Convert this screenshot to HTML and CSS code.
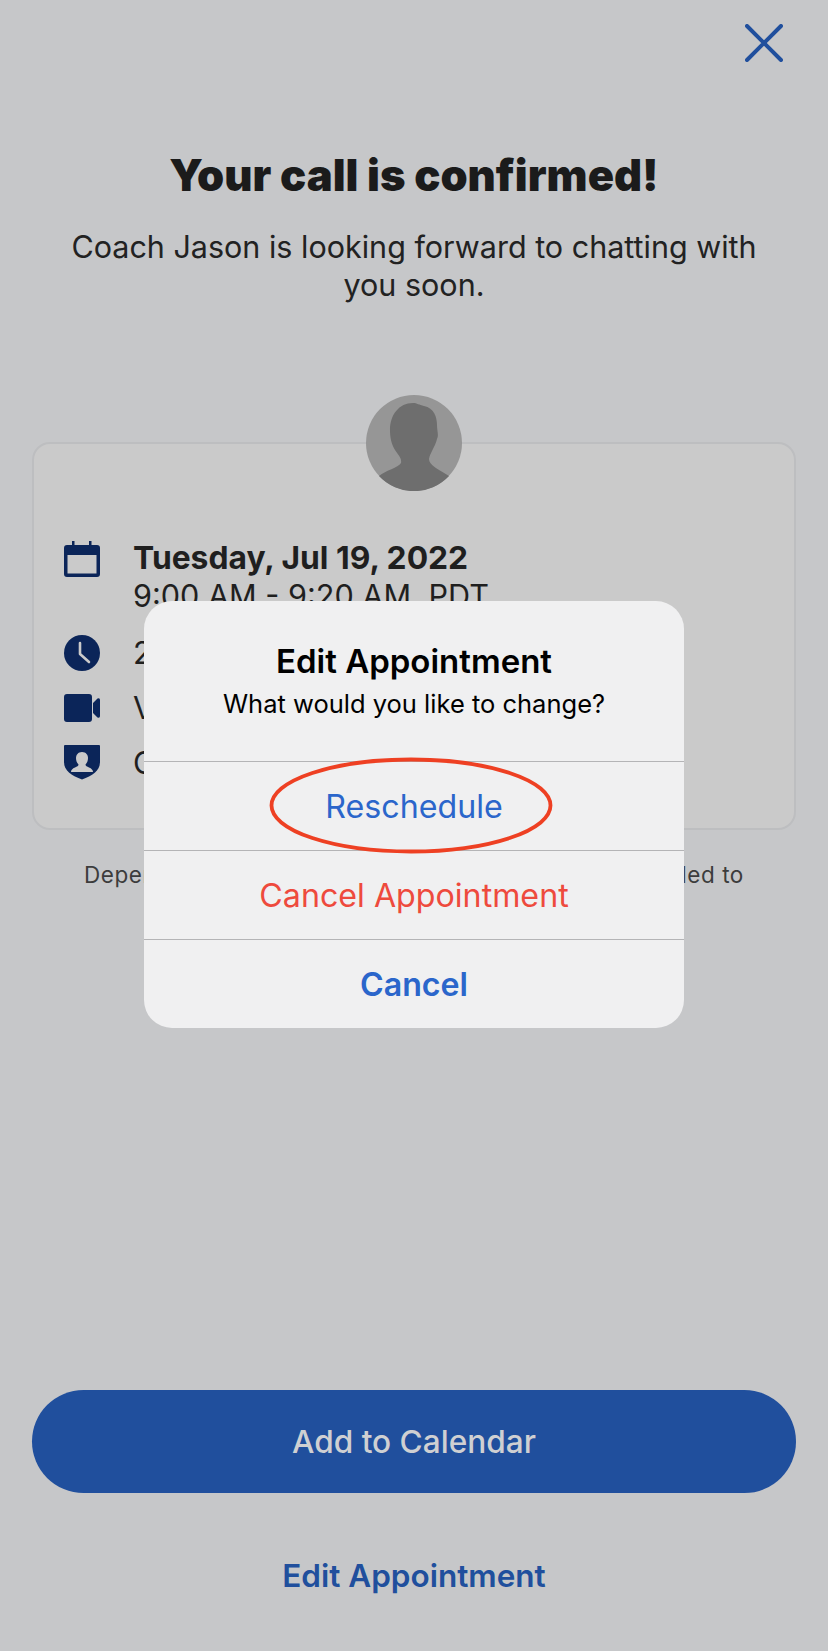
FILE: index.html
```html
<!DOCTYPE html>
<html lang="en">
<head>
<meta charset="utf-8">
<title>Your call is confirmed</title>
<link rel="stylesheet" href="styles.css">
</head>
<body>
<main class="screen">
  <div class="topbar">
    <svg class="close" viewBox="0 0 38 38" width="38" height="38"><path d="M2 2 L36 36 M36 2 L2 36" fill="none" stroke="#204f9d" stroke-width="4" stroke-linecap="round"/></svg>
  </div>
  <h1 class="title">Your call is confirmed!</h1>
  <p class="subtitle">Coach Jason is looking forward to chatting with you soon.</p>
  <section class="card">
    <svg class="avatar" viewBox="0 0 96 96" width="96" height="96">
      <circle cx="48" cy="48" r="48" fill="#969696"/>
      <path d="M13 81 C20 75 32 73 35 68 C36 63 32 60 29 55 C25 48 24 42 24 35 C24 20 33 8 47 8 C51 8 53 10 58 11 C68 13 71 22 71 30 C71 36 73 40 71 44 C69 52 64 58 63 64 C63 70 72 74 83 81 A48 48 0 0 1 13 81 Z" fill="#6e6e6e"/>
    </svg>
    <div class="row row-date">
      <svg class="icon" viewBox="0 0 36 36" width="36" height="36"><path d="M3 4 H8 V0 H10.5 V4 H25 V0 H27.5 V4 H33 A3 3 0 0 1 36 7 V33 A3 3 0 0 1 33 36 H3 A3 3 0 0 1 0 33 V7 A3 3 0 0 1 3 4 Z M3.5 14 V32.5 H32.5 V14 Z" fill="#0b2559" fill-rule="evenodd"/></svg>
      <div class="row-text"><strong>Tuesday, Jul 19, 2022</strong><br>9:00 AM - 9:20 AM, PDT</div>
    </div>
    <div class="row">
      <svg class="icon" viewBox="0 0 36 36" width="36" height="36"><circle cx="18" cy="18" r="18" fill="#0b2559"/><path d="M16 8 V19 L25 27" fill="none" stroke="#cacaca" stroke-width="2.6" stroke-linecap="round" stroke-linejoin="round"/></svg>
      <div class="row-text">20 minutes</div>
    </div>
    <div class="row">
      <svg class="icon" viewBox="0 0 36 36" width="36" height="36"><path d="M3 4 H25 A3 3 0 0 1 28 7 V29 A3 3 0 0 1 25 32 H3 A3 3 0 0 1 0 29 V7 A3 3 0 0 1 3 4 Z M29 13 L33.5 8.5 Q36 7.5 36 10 V26 Q36 28.5 33.5 27.5 L29 23 Z" fill="#0b2559"/></svg>
      <div class="row-text">Video call</div>
    </div>
    <div class="row">
      <svg class="icon" viewBox="0 0 36 36" width="36" height="36"><path d="M1 0 H35 A1 1 0 0 1 36 1 V17 C36 26 28 31 18 34.5 C8 31 0 26 0 17 V1 A1 1 0 0 1 1 0 Z" fill="#0b2559"/><path d="M18 7 C22 7 24 10 24 13 C24 16 23 18 21.5 19.5 C21.5 21 23 21.5 25 22.5 C27.5 23.5 29 25 29 27 H7 C7 25 8.5 23.5 11 22.5 C13 21.5 14.5 21 14.5 19.5 C13 18 12 16 12 13 C12 10 14 7 18 7 Z" fill="#cacaca"/></svg>
      <div class="row-text">Coach Jason</div>
    </div>
  </section>
  <p class="note">Depending on your coach's schedule, you may be called to</p>
  <div class="actions">
    <button class="primary">Add to Calendar</button>
    <button class="link">Edit Appointment</button>
  </div>
</main>

<div class="dialog">
  <div class="dialog-head">
    <h2 class="dialog-title">Edit Appointment</h2>
    <p class="dialog-sub">What would you like to change?</p>
  </div>
  <div class="dialog-btn blue">Reschedule</div>
  <div class="dialog-btn red">Cancel Appointment</div>
  <div class="dialog-btn blue bold">Cancel</div>
</div>
<svg class="ring" viewBox="0 0 286 99" width="286" height="99"><ellipse cx="143" cy="49.5" rx="139.5" ry="46" fill="none" stroke="#ee4023" stroke-width="3.8"/></svg>
</body>
</html>
```

FILE: styles.css
```css
* { box-sizing: border-box; }
html, body { margin: 0; padding: 0; }
body {
  width: 828px;
  height: 1651px;
  position: relative;
  overflow: hidden;
  background: #c6c7c9;
  font-family: Inter, "Liberation Sans", sans-serif;
  color: #1f1f1f;
}
.screen {
  height: 1651px;
  display: flex;
  flex-direction: column;
  padding: 0 32px;
}
.topbar {
  display: flex;
  justify-content: flex-end;
  padding: 24px 13px 0 0;
  height: 62px;
}
.title {
  margin: 88px 0 0;
  font-size: 43.5px;
  line-height: 50px;
  font-weight: 900;
  text-align: center;
  white-space: nowrap;
  color: #1b1b1b;
}
.subtitle {
  margin: 28px 0 0;
  padding: 0 32px;
  font-size: 30.5px;
  line-height: 38px;
  text-align: center;
  color: #222;
}
.card {
  position: relative;
  margin-top: 138px;
  height: 388px;
  padding: 97px 30px 0;
  background: #cacaca;
  border: 2px solid #bdbec0;
  border-radius: 18px;
}
.avatar {
  position: absolute;
  left: 332px;
  top: -49px;
}
.row {
  display: flex;
  align-items: center;
  gap: 33px;
  margin-bottom: 19px;
  height: 36px;
}
.row-date {
  height: 76px;
  align-items: flex-start;
  margin-bottom: 18px;
}
.row-text {
  font-size: 30.6px;
  line-height: 38px;
  white-space: nowrap;
}
.row-date .row-text { margin-top: -2px; }
.row-text strong { font-size: 31.8px; font-weight: 700; }
.note {
  margin: 30px -20px 0;
  font-size: 22.5px;
  letter-spacing: 0.55px;
  line-height: 30px;
  text-align: center;
  color: #3c3c3c;
  white-space: nowrap;
}
.actions {
  margin-top: auto;
  display: flex;
  flex-direction: column;
  align-items: stretch;
}
.primary {
  height: 103px;
  border: 0;
  border-radius: 52px;
  background: #204f9d;
  color: #cfd0d2;
  font: 500 31.6px Inter, "Liberation Sans", sans-serif;
}
.link {
  height: 60px;
  margin: 52px 0 46px;
  border: 0;
  background: none;
  color: #204f9d;
  font: 600 31.5px Inter, "Liberation Sans", sans-serif;
}
.dialog {
  position: absolute;
  left: 144px;
  top: 601px;
  width: 540px;
  height: 427px;
  background: #f0f0f1;
  border-radius: 28px;
  display: flex;
  flex-direction: column;
  text-align: center;
  color: #000;
}
.dialog-head {
  height: 160px;
  padding-top: 40px;
}
.dialog-title {
  margin: 0;
  font-size: 33px;
  line-height: 40px;
  font-weight: 600;
}
.dialog-sub {
  margin: 3px 0 0;
  font-size: 25.5px;
  line-height: 40px;
}
.dialog-btn {
  flex: 1;
  display: flex;
  align-items: center;
  justify-content: center;
  border-top: 1.5px solid #b4b4b6;
  font-size: 32.2px;
}
.blue { color: #2b66cb; }
.red { color: #ee4a3d; }
.bold { font-weight: 600; }
.ring {
  position: absolute;
  left: 268px;
  top: 756px;
}
```
